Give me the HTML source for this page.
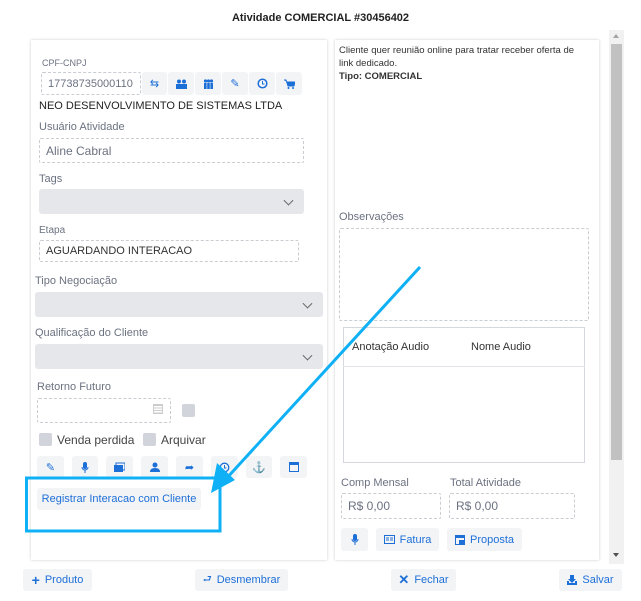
<!DOCTYPE html>
<html><head><meta charset="utf-8"><style>
*{box-sizing:border-box;margin:0;padding:0}
body{width:641px;height:601px;background:#fff;font-family:"Liberation Sans",sans-serif;position:relative;overflow:hidden;color:#333}
.a{position:absolute}
.panel{position:absolute;background:#fff;box-shadow:0 0 3px rgba(0,0,0,.2)}
.lbl{position:absolute;font-size:11px;color:#6b7280;margin-top:1px}
.inp{position:absolute;border:1px dashed #c9ccd1;border-radius:2px;font-size:12px;color:#6b7280;padding-left:6px;display:flex;align-items:center}
.sel{position:absolute;background:#e5e7eb;border-radius:3px}
.sel:after{content:"";position:absolute;right:12px;top:50%;width:6px;height:6px;border-right:1.3px solid #666;border-bottom:1.3px solid #666;transform:translateY(-70%) rotate(45deg)}
.ib{position:absolute;background:#f3f4f6;border-radius:3px;display:flex;align-items:center;justify-content:center;color:#1d6fd8;font-size:11px}
.btn{position:absolute;background:#f3f4f6;border-radius:3px;color:#1d6fd8;font-size:11px;display:flex;align-items:center;justify-content:center;gap:5px}
.cb{position:absolute;width:13px;height:13px;background:#d1d5db;border-radius:2px}
</style></head><body>
<div class="a" style="left:0;top:12px;width:641px;text-align:center;font-size:11px;font-weight:bold;color:#222">Atividade COMERCIAL #30456402</div>

<div class="panel" style="left:31px;top:40px;width:296px;height:520px"></div>
<div class="panel" style="left:335px;top:40px;width:264px;height:520px"></div>

<div class="lbl" style="left:42px;top:57px;font-size:9px">CPF-CNPJ</div>
<div class="inp" style="left:41px;top:72px;width:100px;height:23px;font-size:11px">17738735000110</div>
<div class="ib" style="left:142px;top:72px;width:25px;height:23px">⇆</div>
<div class="ib" style="left:168px;top:72px;width:26px;height:23px"><svg width="11" height="10" viewBox="0 0 11 10"><circle cx="3" cy="2.5" r="2" fill="#1d6fd8"/><circle cx="8" cy="2.5" r="2" fill="#1d6fd8"/><rect x="0" y="5" width="5.5" height="5" fill="#1d6fd8"/><rect x="5.5" y="5" width="5.5" height="5" fill="#1d6fd8"/></svg></div>
<div class="ib" style="left:195px;top:72px;width:26px;height:23px"><svg width="11" height="10" viewBox="0 0 11 10"><circle cx="2.5" cy="2" r="1.6" fill="#1d6fd8"/><circle cx="5.5" cy="2" r="1.6" fill="#1d6fd8"/><circle cx="8.5" cy="2" r="1.6" fill="#1d6fd8"/><rect x="1" y="4" width="2.6" height="6" fill="#1d6fd8"/><rect x="4.2" y="4" width="2.6" height="6" fill="#1d6fd8"/><rect x="7.4" y="4" width="2.6" height="6" fill="#1d6fd8"/></svg></div>
<div class="ib" style="left:222px;top:72px;width:26px;height:23px">✎</div>
<div class="ib" style="left:249px;top:72px;width:26px;height:23px"><svg width="11" height="11"><circle cx="5.5" cy="5.5" r="4.3" fill="none" stroke="#1d6fd8" stroke-width="1.5"/><path d="M5.5 3v3h2" stroke="#1d6fd8" fill="none"/></svg></div>
<div class="ib" style="left:276px;top:72px;width:26px;height:23px"><svg width="11" height="10"><path d="M0 1h2l2 6h6l1-4H3" fill="#1d6fd8" stroke="#1d6fd8"/><circle cx="4.5" cy="9" r="1" fill="#1d6fd8"/><circle cx="9" cy="9" r="1" fill="#1d6fd8"/></svg></div>
<div class="a" style="left:39px;top:100px;font-size:11px;color:#222">NEO DESENVOLVIMENTO DE SISTEMAS LTDA</div>
<div class="lbl" style="left:39px;top:120px">Usuário Atividade</div>
<div class="inp" style="left:39px;top:138px;width:265px;height:25px">Aline Cabral</div>
<div class="lbl" style="left:39px;top:172px">Tags</div>
<div class="sel" style="left:39px;top:189px;width:265px;height:25px"></div>
<div class="lbl" style="left:39px;top:224px;font-size:10px">Etapa</div>
<div class="inp" style="left:39px;top:240px;width:260px;height:22px;color:#333;font-size:11px">AGUARDANDO INTERACAO</div>
<div class="lbl" style="left:35px;top:274px">Tipo Negociação</div>
<div class="sel" style="left:35px;top:292px;width:288px;height:25px"></div>
<div class="lbl" style="left:35px;top:326px">Qualificação do Cliente</div>
<div class="sel" style="left:35px;top:344px;width:288px;height:25px"></div>
<div class="lbl" style="left:37px;top:380px">Retorno Futuro</div>
<div class="inp" style="left:37px;top:398px;width:134px;height:25px"></div>
<div class="a" style="left:153px;top:404px;width:10px;height:10px;border:1px solid #ccc;background:repeating-linear-gradient(#ccc 0 1px,#fff 1px 2.5px)"></div>
<div class="cb" style="left:182px;top:404px"></div>
<div class="cb" style="left:39px;top:433px"></div>
<div class="a" style="left:57px;top:433px;font-size:12px;color:#444">Venda perdida</div>
<div class="cb" style="left:143px;top:433px"></div>
<div class="a" style="left:161px;top:433px;font-size:12px;color:#444">Arquivar</div>
<div class="ib" style="left:37px;top:456px;width:27px;height:22px">✎</div>
<div class="ib" style="left:72px;top:456px;width:26px;height:22px"><svg width="8" height="11"><rect x="2" y="0" width="4" height="7" rx="2" fill="#1d6fd8"/><path d="M1 5a3 3 0 0 0 6 0M4 8v3" stroke="#1d6fd8" fill="none"/></svg></div>
<div class="ib" style="left:106px;top:456px;width:27px;height:22px"><svg width="11" height="10"><rect x="0" y="3" width="9" height="7" fill="#1d6fd8"/><rect x="2" y="1" width="9" height="7" fill="none" stroke="#1d6fd8"/></svg></div>
<div class="ib" style="left:141px;top:456px;width:27px;height:22px"><svg width="10" height="10"><circle cx="5" cy="3" r="2.5" fill="#1d6fd8"/><path d="M0 10q0-4 5-4t5 4z" fill="#1d6fd8"/></svg></div>
<div class="ib" style="left:176px;top:456px;width:27px;height:22px">➦</div>
<div class="ib" style="left:211px;top:456px;width:27px;height:22px"><svg width="11" height="11"><circle cx="5.5" cy="5.5" r="4.3" fill="none" stroke="#1d6fd8" stroke-width="1.3"/><path d="M5.5 3v3h2" stroke="#1d6fd8" fill="none"/></svg></div>
<div class="ib" style="left:246px;top:456px;width:26px;height:22px">⚓</div>
<div class="ib" style="left:280px;top:456px;width:27px;height:22px"><svg width="10" height="10"><rect x=".5" y=".5" width="9" height="9" fill="none" stroke="#1d6fd8"/><rect x="0" y="0" width="10" height="3" fill="#1d6fd8"/></svg></div>
<div class="btn" style="left:37px;top:488px;width:164px;height:22px">Registrar Interacao com Cliente</div>

<div class="a" style="left:339px;top:44px;width:245px;font-size:9.5px;line-height:13px;color:#333">Cliente quer reunião online para tratar receber oferta de link dedicado.<br><b>Tipo: COMERCIAL</b></div>
<div class="lbl" style="left:339px;top:210px">Observações</div>
<div class="inp" style="left:339px;top:228px;width:250px;height:93px"></div>
<div class="a" style="left:343px;top:327px;width:242px;height:136px;border:1px solid #d5d9de"></div>
<div class="a" style="left:343px;top:366px;width:242px;height:1px;background:#e0e3e7"></div>
<div class="a" style="left:352px;top:341px;font-size:11px;color:#333">Anotação Audio</div>
<div class="a" style="left:471px;top:341px;font-size:11px;color:#333">Nome Audio</div>
<div class="lbl" style="left:341px;top:476px">Comp Mensal</div>
<div class="lbl" style="left:450px;top:476px">Total Atividade</div>
<div class="inp" style="left:341px;top:493px;width:100px;height:26px">R$ 0,00</div>
<div class="inp" style="left:449px;top:493px;width:126px;height:26px">R$ 0,00</div>
<div class="ib" style="left:341px;top:528px;width:27px;height:23px"><svg width="8" height="11"><rect x="2" y="0" width="4" height="7" rx="2" fill="#1d6fd8"/><path d="M1 5a3 3 0 0 0 6 0M4 8v3" stroke="#1d6fd8" fill="none"/></svg></div>
<div class="btn" style="left:376px;top:528px;width:63px;height:23px"><svg width="11" height="9"><rect x=".5" y=".5" width="10" height="8" fill="none" stroke="#1d6fd8"/><path d="M2 3h3M2 5h3M6 3h3M6 5h3" stroke="#1d6fd8"/></svg>Fatura</div>
<div class="btn" style="left:447px;top:528px;width:75px;height:23px"><svg width="10" height="10"><rect x=".5" y=".5" width="9" height="9" fill="none" stroke="#1d6fd8"/><rect x="0" y="0" width="10" height="3" fill="#1d6fd8"/><rect x="4" y="5" width="6" height="5" fill="#1d6fd8"/></svg>Proposta</div>

<div class="a" style="left:609px;top:30px;width:15px;height:534px;background:#f1f1f1"></div>
<div class="a" style="left:611px;top:44px;width:11px;height:416px;background:#c1c1c1"></div>
<div class="a" style="left:613px;top:34px;border:3.5px solid transparent;border-bottom:4px solid #a3a3a3;border-top:0"></div>
<div class="a" style="left:613px;top:553px;border:3.5px solid transparent;border-top:4px solid #505050;border-bottom:0"></div>

<div class="btn" style="left:23px;top:569px;width:69px;height:22px"><b style="font-size:14px">+</b>Produto</div>
<div class="btn" style="left:195px;top:569px;width:93px;height:22px"><span style="font-size:10px">⮐</span>Desmembrar</div>
<div class="btn" style="left:391px;top:569px;width:65px;height:22px"><b style="font-size:13px">✕</b>Fechar</div>
<div class="btn" style="left:559px;top:569px;width:63px;height:22px"><svg width="10" height="10"><path d="M0 6v4h10V6H8v2H2V6z" fill="#1d6fd8"/><path d="M3 0h4v4h2L5 8 1 4h2z" fill="#1d6fd8"/></svg>Salvar</div>

<svg class="a" style="left:0;top:0" width="641" height="601">
<rect x="26.5" y="478" width="193.5" height="53" fill="none" stroke="#0fb0f5" stroke-width="3"/>
<line x1="420" y1="267" x2="225" y2="480" stroke="#0fb0f5" stroke-width="3"/>
<path d="M211 493L217 463L235 480Z" fill="#0fb0f5"/>
</svg>
</body></html>
